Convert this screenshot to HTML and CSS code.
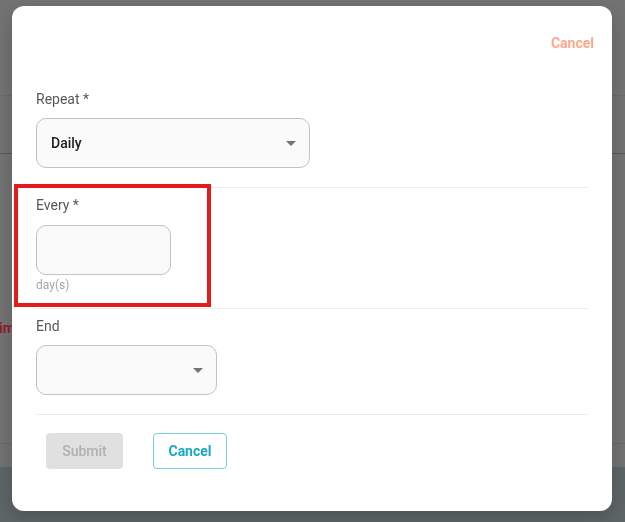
FILE: index.html
```html
<!DOCTYPE html>
<html lang="en">
<head>
<meta charset="utf-8">
<title>Repeat</title>
<link rel="stylesheet" href="styles.css">
</head>
<body>
<div class="page">
  <div class="bg-top"></div>
  <div class="bg-nav"></div>
  <div class="bg-head"></div>
  <div class="bg-main"><span class="bg-word">im</span></div>
  <div class="bg-row"></div>
  <div class="bg-foot"></div>
</div>

<div class="modal">
  <div class="modal-head">
    <span class="link-cancel">Cancel</span>
  </div>
  <div class="modal-body">
    <div class="section">
      <div class="label">Repeat *</div>
      <div class="select select-wide">
        <span class="select-value">Daily</span>
        <span class="caret"></span>
      </div>
    </div>
    <div class="section section-every">
      <div class="label label-every">Every *</div>
      <div class="input"></div>
      <div class="helper">day(s)</div>
    </div>
    <div class="section">
      <div class="label">End</div>
      <div class="select select-narrow">
        <span class="select-value"></span>
        <span class="caret"></span>
      </div>
    </div>
    <div class="footer">
      <button class="btn btn-submit" disabled>Submit</button>
      <button class="btn btn-cancel">Cancel</button>
    </div>
  </div>
  <div class="highlight"></div>
</div>
</body>
</html>
```

FILE: styles.css
```css
* { box-sizing: border-box; }

html, body {
  margin: 0;
  padding: 0;
  height: 100%;
}

body {
  font-family: Roboto, "Liberation Sans", Arial, sans-serif;
  background: #737373;
  overflow: hidden;
}

/* faded page behind the dialog */
.page {
  display: flex;
  flex-direction: column;
  height: 522px;
}
.bg-top { height: 21px; border-bottom: 1px solid #5d7980; }
.bg-nav { height: 75px; border-bottom: 1px solid #6a6a6a; }
.bg-head { height: 58px; border-bottom: 1px solid #575757; }
.bg-main {
  height: 290px;
  border-bottom: 1px solid #5f6b6d;
  padding-top: 164px;
}
.bg-word {
  display: block;
  margin-left: -1px;
  font-size: 14px;
  font-weight: 700;
  line-height: 20px;
  color: #8a2323;
}
.bg-row { height: 23px; }
.bg-foot { flex: 1; background: #5d6567; }

/* dialog */
.modal {
  position: fixed;
  left: 12px;
  top: 6px;
  width: 600px;
  height: 505px;
  background: #fff;
  border-radius: 12px;
  box-shadow: 0 6px 18px rgba(0, 0, 0, 0.18);
}

.modal-head {
  display: flex;
  justify-content: flex-end;
  padding: 27px 18px 0 0;
  height: 47px;
}

.link-cancel {
  font-size: 14px;
  line-height: 20px;
  font-weight: 700;
  color: #ffa78a;
}

.modal-body {
  padding: 29px 24px 0;
}

.section {
  padding: 7px 0 19px;
  border-top: 1px solid #ececec;
}
.section:first-child { border-top: none; }
.section-every { padding-bottom: 15px; }

.label {
  font-size: 14px;
  line-height: 20px;
  color: #585858;
  margin-bottom: 9px;
}
.label-every { margin-bottom: 10px; }

.select {
  display: flex;
  align-items: center;
  justify-content: space-between;
  height: 50px;
  padding: 0 13px 0 14px;
  border: 1px solid #c2c2c2;
  border-radius: 10px;
  background: #fafafa;
}
.select-wide { width: 274px; }
.select-narrow { width: 181px; }

.select-value {
  font-size: 14px;
  font-weight: 500;
  color: #212121;
}

.caret {
  width: 0;
  height: 0;
  border-left: 5px solid transparent;
  border-right: 5px solid transparent;
  border-top: 5px solid #737373;
}

.input {
  width: 135px;
  height: 50px;
  border: 1px solid #c2c2c2;
  border-radius: 10px;
  background: #fafafa;
}

.helper {
  margin-top: 2px;
  font-size: 12px;
  line-height: 16px;
  color: #a8a8a8;
}

.footer {
  display: flex;
  gap: 30px;
  padding: 18px 0 0 10px;
  border-top: 1px solid #ececec;
}

.btn {
  height: 36px;
  border-radius: 4px;
  font-family: Roboto, "Liberation Sans", Arial, sans-serif;
  font-size: 14px;
  font-weight: 500;
  padding: 0;
  cursor: pointer;
}
.btn-submit {
  width: 77px;
  background: #e0e0e0;
  border: none;
  color: #b0b0b0;
}
.btn-cancel {
  width: 74px;
  background: #fff;
  border: 1px solid #74d1df;
  color: #18a8c2;
  font-weight: 700;
}

/* annotation box */
.highlight {
  position: absolute;
  left: 2px;
  top: 178px;
  width: 197px;
  height: 123px;
  border: 4px solid #e31b1b;
}
```
